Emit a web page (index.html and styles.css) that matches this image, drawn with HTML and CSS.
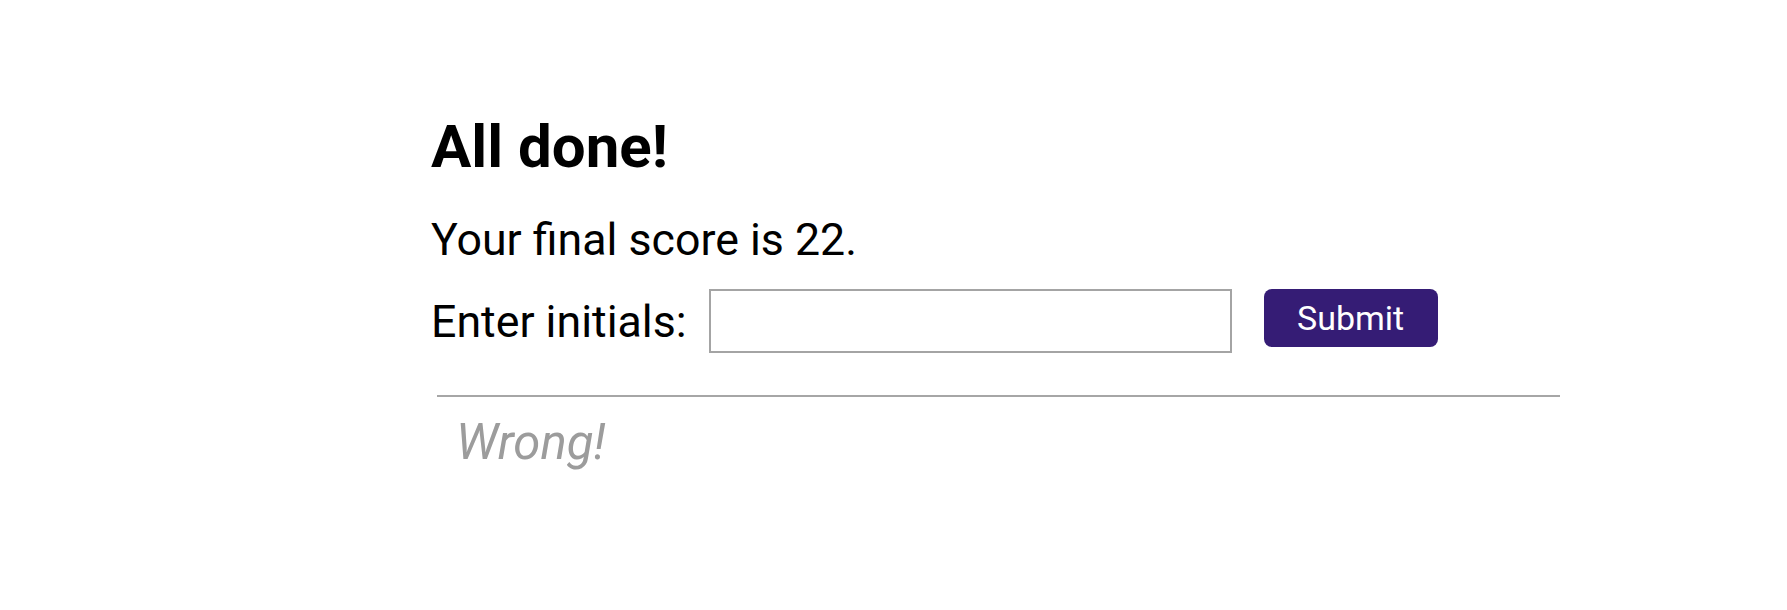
FILE: index.html
```html
<!DOCTYPE html>
<html lang="en">
<head>
<meta charset="utf-8">
<title>All done!</title>
<link rel="stylesheet" href="styles.css">
</head>
<body>
<main class="quiz">
  <section class="done">
    <h1 class="title">All done!</h1>
    <p class="score">Your final score is 22.</p>
    <form class="initials-form">
      <label class="initials-label" for="initials">Enter initials:</label>
      <input class="initials-input" id="initials" type="text">
      <button class="submit-btn" type="button">Submit</button>
    </form>
  </section>
  <footer class="feedback">
    <hr class="divider">
    <p class="result">Wrong!</p>
  </footer>
</main>
</body>
</html>
```
FILE: styles.css
```css
html, body {
  margin: 0;
  padding: 0;
  background: #ffffff;
}

body {
  font-family: Roboto, "Liberation Sans", sans-serif;
  color: #000000;
}

.quiz {
  margin-left: 431px;
  width: 1140px;
  padding-top: 111px;
}

.title {
  margin: 0;
  font-size: 60px;
  font-weight: 700;
  line-height: 72px;
}

.score {
  margin: 31px 0 0 0;
  font-size: 44.7px;
  line-height: 53px;
}

.initials-form {
  display: flex;
  align-items: flex-start;
  margin-top: 22px;
}

.initials-label {
  font-size: 44.7px;
  line-height: 53px;
  margin-top: 7px;
}

.initials-input {
  box-sizing: border-box;
  width: 523px;
  height: 64px;
  margin: 0 0 0 22px;
  border: 2px solid #a4a4a4;
  background: #ffffff;
  padding: 0 10px;
  font-family: inherit;
  font-size: 34px;
  outline: none;
}

.submit-btn {
  box-sizing: border-box;
  width: 174px;
  height: 58px;
  margin-left: 32px;
  border: none;
  border-radius: 8px;
  background: #351c75;
  color: #ffffff;
  font-family: inherit;
  font-size: 34px;
  line-height: 1;
  padding: 0;
}

.feedback {
  margin-top: 42px;
}

.divider {
  margin: 0 0 0 6px;
  width: 1123px;
  height: 2px;
  border: none;
  background: #a6a6a6;
}

.result {
  margin: 18px 0 0 0;
  padding-left: 25px;
  font-size: 49px;
  font-style: italic;
  line-height: 56px;
  color: #9c9c9c;
}
```
